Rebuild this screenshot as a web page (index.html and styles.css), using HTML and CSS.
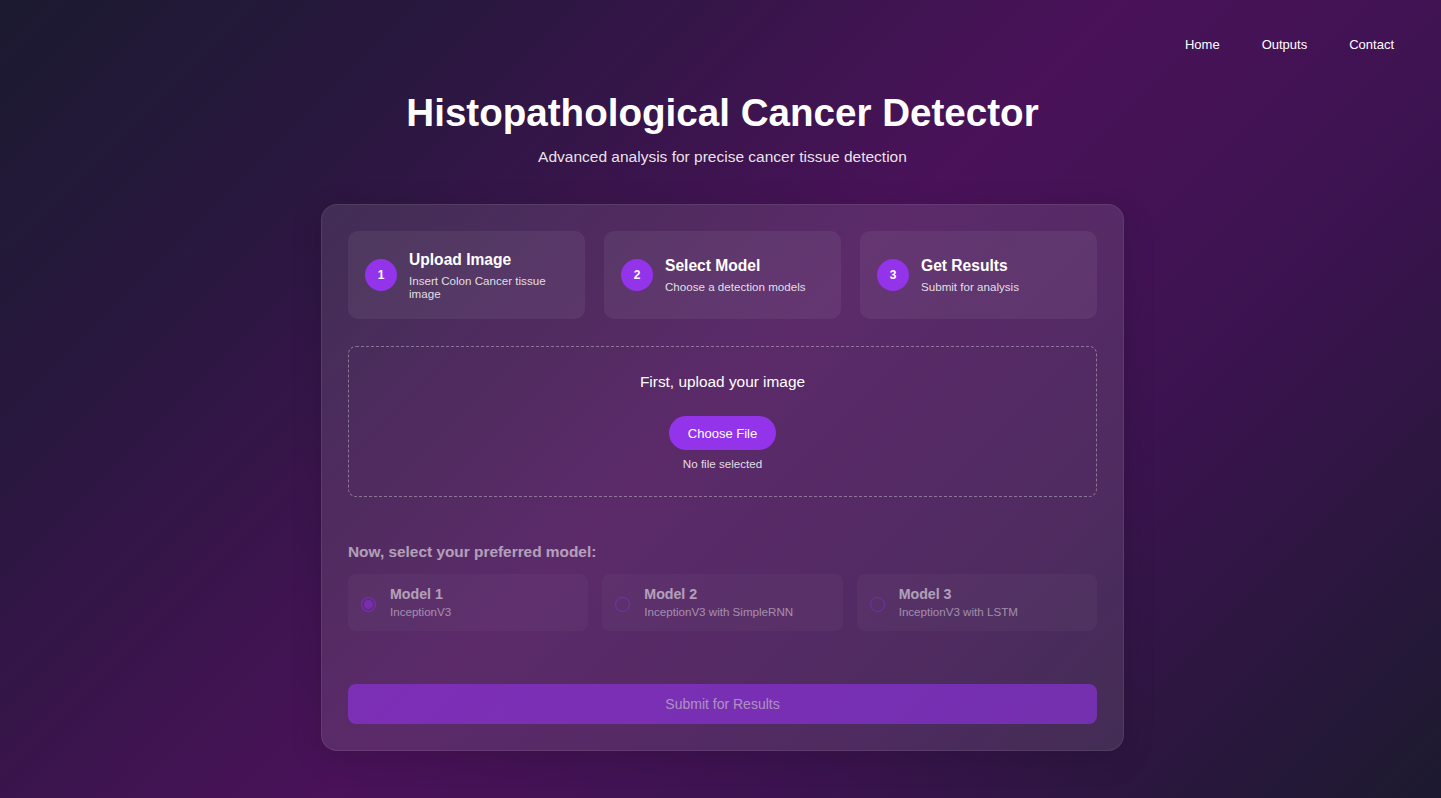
FILE: index.html
```html
<!DOCTYPE html>
<html lang="en">
<head>
<meta charset="utf-8">
<title>Histopathological Cancer Detector</title>
<link rel="stylesheet" href="styles.css">
</head>
<body>
  <nav class="nav">
    <a href="#" class="nav-link">Home</a>
    <a href="#" class="nav-link">Outputs</a>
    <a href="#" class="nav-link">Contact</a>
  </nav>
  <main class="main">
    <header class="header">
      <h1 class="title">Histopathological Cancer Detector</h1>
      <p class="subtitle">Advanced analysis for precise cancer tissue detection</p>
    </header>
    <section class="panel">
      <div class="steps">
        <div class="step">
          <span class="step-num">1</span>
          <div class="step-text">
            <div class="step-title">Upload Image</div>
            <div class="step-desc">Insert Colon Cancer tissue image</div>
          </div>
        </div>
        <div class="step">
          <span class="step-num">2</span>
          <div class="step-text">
            <div class="step-title">Select Model</div>
            <div class="step-desc">Choose a detection models</div>
          </div>
        </div>
        <div class="step">
          <span class="step-num">3</span>
          <div class="step-text">
            <div class="step-title">Get Results</div>
            <div class="step-desc">Submit for analysis</div>
          </div>
        </div>
      </div>
      <div class="upload">
        <div class="upload-title">First, upload your image</div>
        <button class="choose-btn" type="button">Choose File</button>
        <div class="no-file">No file selected</div>
      </div>
      <div class="models-section">
        <div class="models-heading">Now, select your preferred model:</div>
        <div class="models">
          <label class="model">
            <span class="radio radio-checked"></span>
            <span class="model-text">
              <span class="model-title">Model 1</span>
              <span class="model-desc">InceptionV3</span>
            </span>
          </label>
          <label class="model">
            <span class="radio"></span>
            <span class="model-text">
              <span class="model-title">Model 2</span>
              <span class="model-desc">InceptionV3 with SimpleRNN</span>
            </span>
          </label>
          <label class="model">
            <span class="radio"></span>
            <span class="model-text">
              <span class="model-title">Model 3</span>
              <span class="model-desc">InceptionV3 with LSTM</span>
            </span>
          </label>
        </div>
      </div>
      <button class="submit" type="button">Submit for Results</button>
    </section>
  </main>
</body>
</html>
```
FILE: styles.css
```css
* { box-sizing: border-box; }

html, body { height: 100%; }

body {
  margin: 0;
  min-height: 798px;
  font-family: "Liberation Sans", Arial, sans-serif;
  color: #fff;
  background: linear-gradient(135deg, #1b1a30 0%, #2a1740 22%, #4a1259 50%, #3c1350 70%, #1c1a2f 100%);
  overflow: hidden;
}

.nav {
  display: flex;
  justify-content: flex-end;
  gap: 42px;
  padding: 36px 47px 0 0;
}

.nav-link {
  color: #fff;
  text-decoration: none;
  font-size: 13px;
  line-height: 18px;
}

.main {
  padding-left: 4px;
}

.header {
  text-align: center;
  margin-top: 36px;
}

.title {
  margin: 0;
  font-size: 38.6px;
  line-height: 46px;
  font-weight: 700;
}

.subtitle {
  margin: 11px 0 0;
  font-size: 15.5px;
  line-height: 20px;
  color: rgba(255, 255, 255, 0.9);
}

.panel {
  width: 803px;
  margin: 37px auto 0;
  padding: 26px;
  border: 1px solid rgba(255, 255, 255, 0.08);
  border-radius: 16px;
  background: rgba(255, 255, 255, 0.1);
  box-shadow: 0 8px 32px rgba(0, 0, 0, 0.15);
}

.steps {
  display: grid;
  grid-template-columns: repeat(3, 1fr);
  gap: 19px;
}

.step {
  display: flex;
  align-items: center;
  gap: 12px;
  height: 88px;
  padding: 0 18px 0 17px;
  border-radius: 10px;
  background: rgba(255, 255, 255, 0.06);
}

.step-num {
  flex: 0 0 32px;
  width: 32px;
  height: 32px;
  border-radius: 50%;
  background: #9333ea;
  display: flex;
  align-items: center;
  justify-content: center;
  font-size: 12px;
  font-weight: 700;
}

.step-title {
  font-size: 15.6px;
  line-height: 18px;
  font-weight: 700;
}

.step-desc {
  margin-top: 5px;
  font-size: 11.6px;
  line-height: 13px;
  color: rgba(255, 255, 255, 0.85);
}

.upload {
  margin-top: 27px;
  height: 151px;
  border: 1px dashed rgba(255, 255, 255, 0.35);
  border-radius: 8px;
  display: flex;
  flex-direction: column;
  align-items: center;
  padding-top: 24px;
}

.upload-title {
  font-size: 15.4px;
  line-height: 22px;
}

.choose-btn {
  margin-top: 23px;
  height: 34px;
  padding: 0 19px;
  border: none;
  border-radius: 17px;
  background: #9333ea;
  color: #fff;
  font-family: inherit;
  font-size: 13px;
}

.no-file {
  margin-top: 7px;
  font-size: 11.6px;
  line-height: 14px;
  color: rgba(255, 255, 255, 0.85);
}

.models-section {
  margin-top: 46px;
  opacity: 0.55;
}

.models-heading {
  font-size: 15.4px;
  line-height: 18px;
  font-weight: 700;
}

.models {
  margin-top: 13px;
  display: grid;
  grid-template-columns: repeat(3, 1fr);
  gap: 14px;
}

.model {
  display: flex;
  align-items: center;
  gap: 14px;
  height: 57px;
  padding: 0 13px;
  border-radius: 8px;
  background: rgba(255, 255, 255, 0.06);
}

.radio {
  flex: 0 0 15px;
  width: 15px;
  height: 15px;
  border-radius: 50%;
  border: 1.5px solid #9333ea;
  margin-top: 3px;
}

.radio-checked {
  background: #9333ea;
  box-shadow: inset 0 0 0 2px #6b2a9a;
}

.model-text {
  display: flex;
  flex-direction: column;
  margin-top: -2px;
}

.model-title {
  font-size: 14.2px;
  line-height: 17px;
  font-weight: 700;
}

.model-desc {
  margin-top: 2px;
  font-size: 11.6px;
  line-height: 13px;
  color: rgba(255, 255, 255, 0.85);
}

.submit {
  margin-top: 53px;
  width: 100%;
  height: 40px;
  border: none;
  border-radius: 8px;
  background: #9333ea;
  opacity: 0.6;
  color: rgba(255, 255, 255, 0.8);
  font-family: inherit;
  font-size: 14px;
}
```
